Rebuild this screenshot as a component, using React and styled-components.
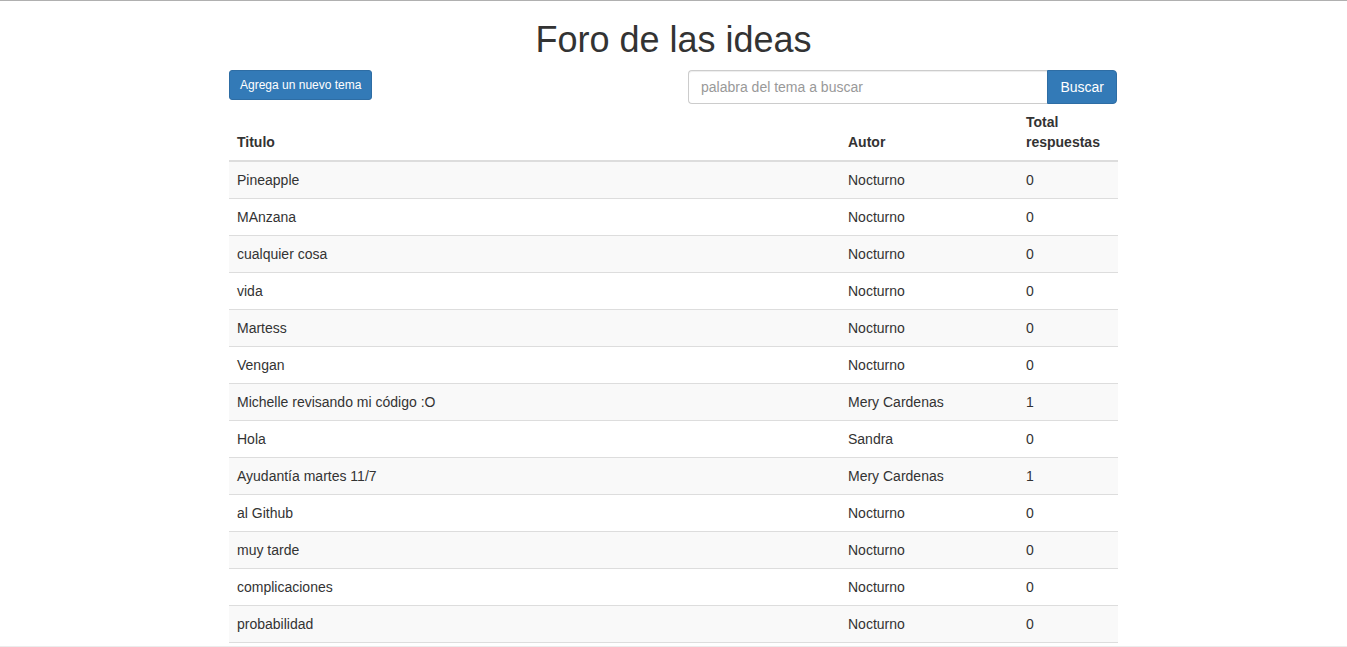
import React from 'react';
import styled, { createGlobalStyle } from 'styled-components';

const GlobalStyle = createGlobalStyle`
  html, body {
    margin: 0;
    padding: 0;
    background: #fff;
  }
  body {
    font-family: 'Liberation Sans', Arial, Helvetica, sans-serif;
    font-size: 14px;
    line-height: 1.42857143;
    color: #333;
  }
  * {
    box-sizing: border-box;
  }
`;

const TopEdge = styled.div`
  position: fixed;
  top: 0;
  left: 0;
  right: 0;
  height: 1px;
  background: #b0b0b0;
  z-index: 5;
`;

const BottomEdge = styled.div`
  position: fixed;
  bottom: 0;
  left: 0;
  right: 0;
  height: 1px;
  background: #ececec;
  z-index: 5;
`;

const Container = styled.div`
  width: 889px;
  margin: 0 auto;
`;

const Title = styled.h1`
  font-size: 36px;
  font-weight: 500;
  line-height: 1.1;
  margin: 20px 0 10px;
  text-align: center;
  color: #333;
`;

const Toolbar = styled.div`
  display: flex;
  justify-content: space-between;
  align-items: flex-start;
  height: 34px;
`;

const Button = styled.button`
  font-family: inherit;
  color: #fff;
  background-color: #337ab7;
  border: 1px solid #2e6da4;
  cursor: pointer;
  white-space: nowrap;
  padding: ${p => (p.small ? '5px 10px' : '6px 12px')};
  font-size: ${p => (p.small ? '12px' : '14px')};
  line-height: ${p => (p.small ? '1.5' : '1.42857143')};
  border-radius: ${p => (p.attached ? '0 4px 4px 0' : '3px')};
  height: ${p => (p.small ? '30px' : '34px')};
`;

const SearchGroup = styled.form`
  display: flex;
  width: 429px;
  margin: 0 1px 0 0;
`;

const SearchInput = styled.input`
  flex: 1;
  height: 34px;
  padding: 6px 12px;
  font-family: inherit;
  font-size: 14px;
  color: #555;
  border: 1px solid #ccc;
  border-right: 0;
  border-radius: 4px 0 0 4px;
  box-shadow: inset 0 1px 1px rgba(0, 0, 0, 0.075);
  outline: none;

  &::placeholder {
    color: #999;
  }
`;

const Table = styled.table`
  width: 100%;
  border-collapse: collapse;
  border-spacing: 0;
  table-layout: fixed;
  border-bottom: 1px solid #ddd;
  margin-bottom: 20px;
`;

const Th = styled.th`
  text-align: left;
  vertical-align: bottom;
  padding: 8px;
  line-height: 20px;
  font-weight: 700;
  border-bottom: 2px solid #ddd;
`;

const Row = styled.tr`
  background: ${p => (p.striped ? '#f9f9f9' : '#fff')};
`;

const Td = styled.td`
  padding: 8px;
  line-height: 20px;
  vertical-align: top;
  border-top: 1px solid #ddd;
`;

const topics = [
  ['Pineapple', 'Nocturno', 0],
  ['MAnzana', 'Nocturno', 0],
  ['cualquier cosa', 'Nocturno', 0],
  ['vida', 'Nocturno', 0],
  ['Martess', 'Nocturno', 0],
  ['Vengan', 'Nocturno', 0],
  ['Michelle revisando mi código :O', 'Mery Cardenas', 1],
  ['Hola', 'Sandra', 0],
  ['Ayudantía martes 11/7', 'Mery Cardenas', 1],
  ['al Github', 'Nocturno', 0],
  ['muy tarde', 'Nocturno', 0],
  ['complicaciones', 'Nocturno', 0],
  ['probabilidad', 'Nocturno', 0],
];

export default function App() {
  return (
    <>
      <GlobalStyle />
      <TopEdge />
      <Container>
        <Title>Foro de las ideas</Title>
        <Toolbar>
          <Button small type="button">Agrega un nuevo tema</Button>
          <SearchGroup onSubmit={e => e.preventDefault()}>
            <SearchInput placeholder="palabra del tema a buscar" />
            <Button attached type="submit">Buscar</Button>
          </SearchGroup>
        </Toolbar>
        <Table>
          <colgroup>
            <col style={{ width: 611 }} />
            <col style={{ width: 178 }} />
            <col style={{ width: 100 }} />
          </colgroup>
          <thead>
            <tr>
              <Th>Titulo</Th>
              <Th>Autor</Th>
              <Th>Total respuestas</Th>
            </tr>
          </thead>
          <tbody>
            {topics.map(([title, author, total], i) => (
              <Row key={title} striped={i % 2 === 0}>
                <Td>{title}</Td>
                <Td>{author}</Td>
                <Td>{total}</Td>
              </Row>
            ))}
          </tbody>
        </Table>
      </Container>
      <BottomEdge />
    </>
  );
}
